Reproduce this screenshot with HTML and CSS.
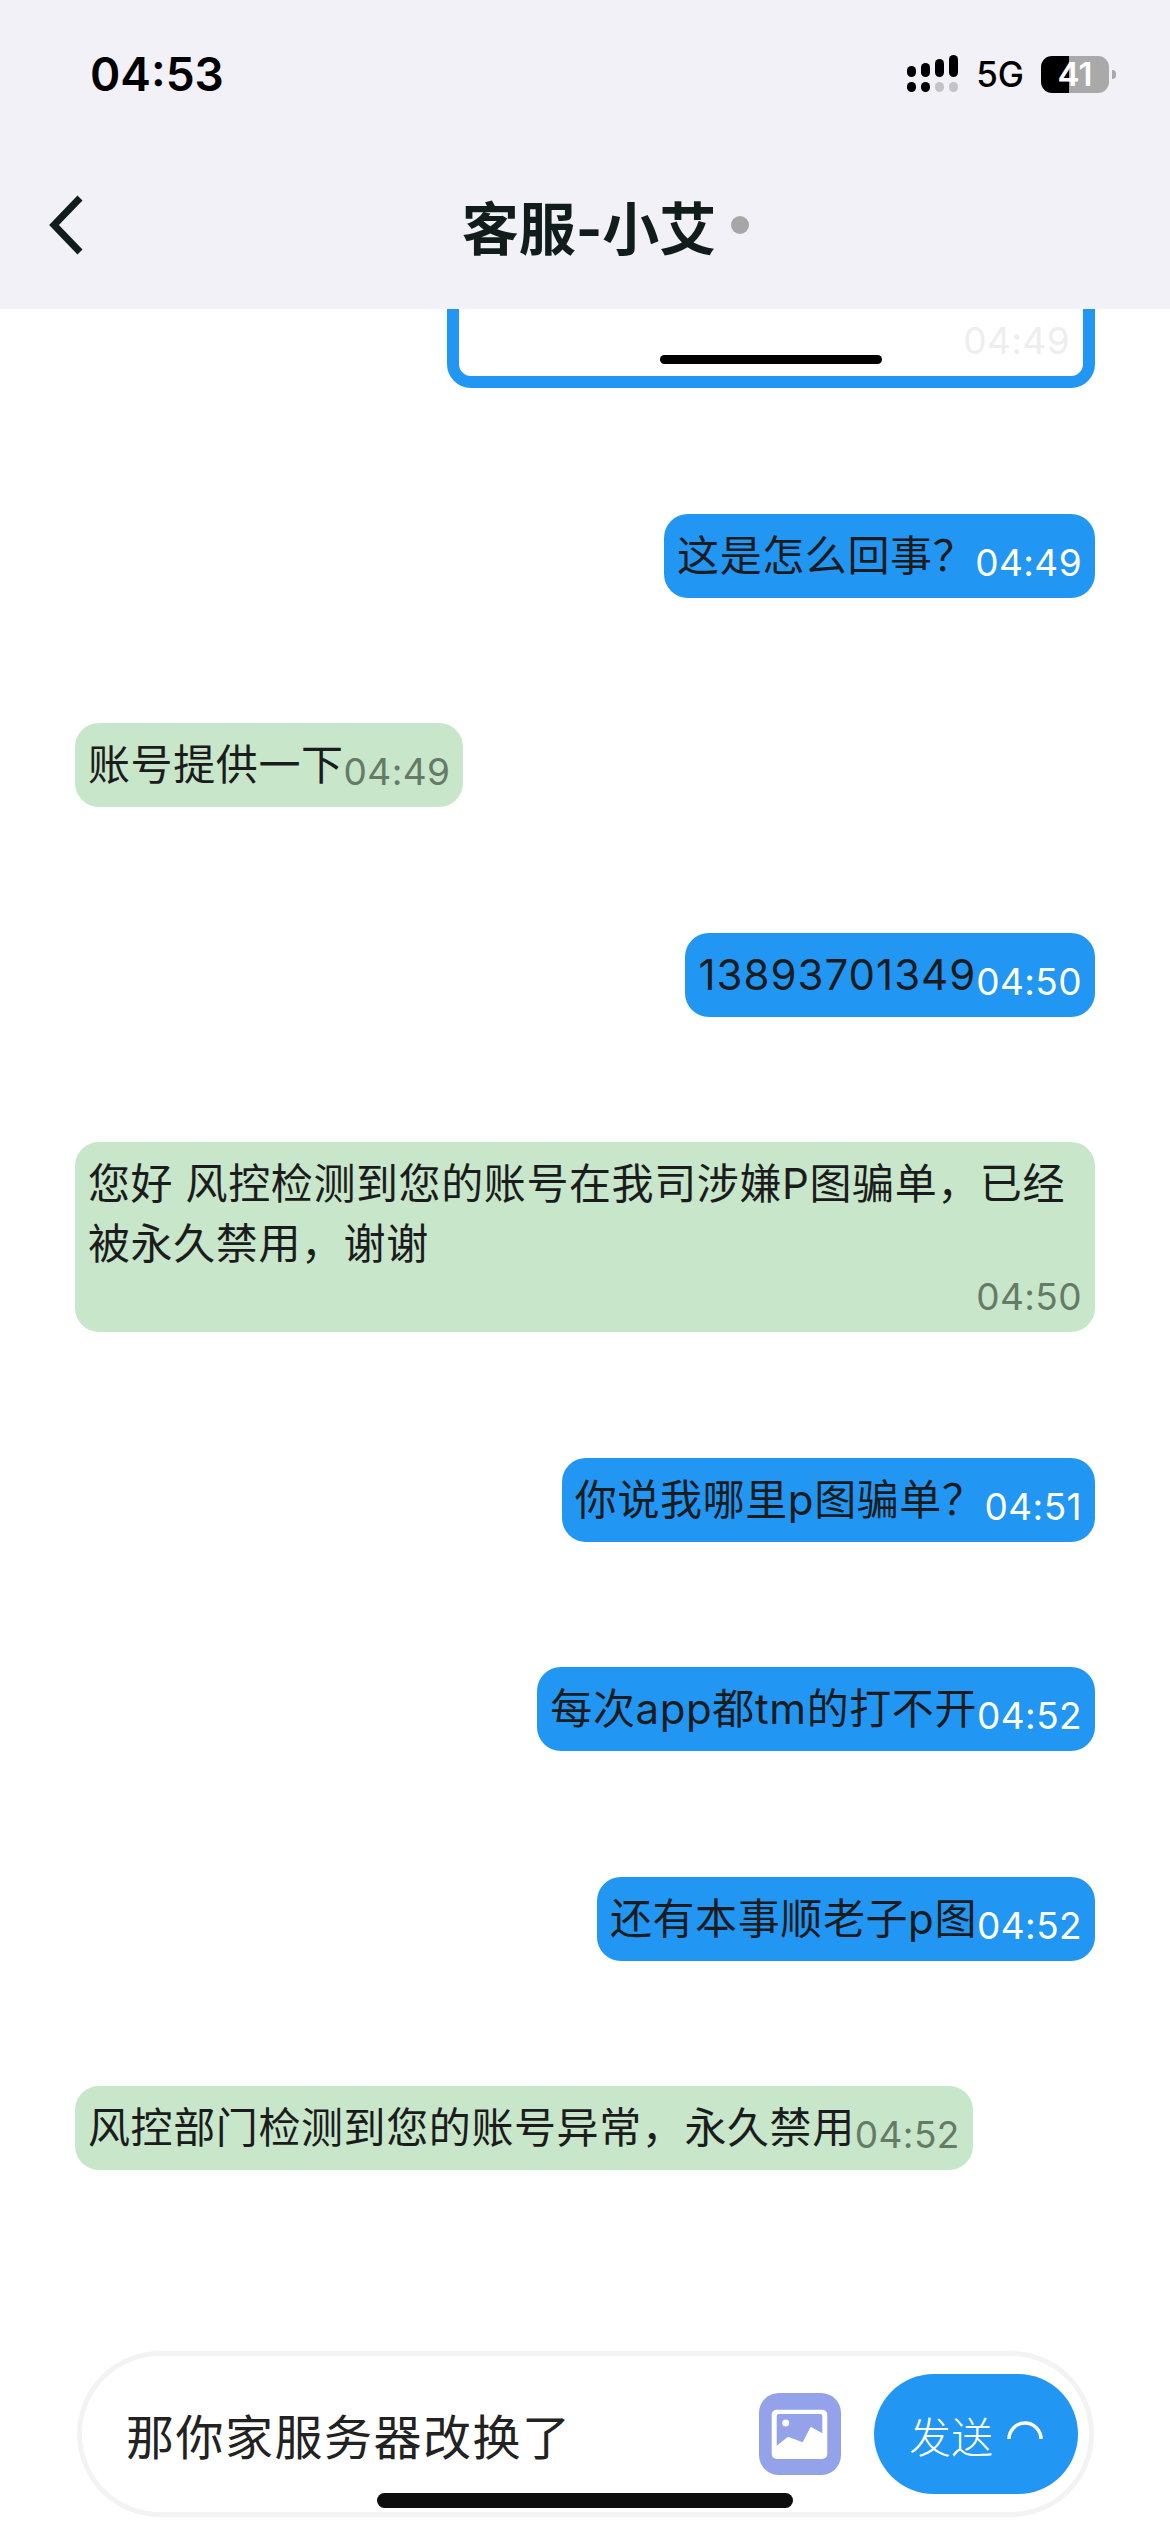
FILE: index.html
```html
<!DOCTYPE html>
<html lang="zh-CN">
<head>
  <meta charset="UTF-8" />
  <meta name="viewport" content="width=device-width, initial-scale=1.0"/>
  <title>客服-小艾</title>
  <link rel="stylesheet" href="styles.css">
</head>
<body>

  <div class="app">
    <header class="header">
      <div class="status-bar">
        <span class="clock">04:53</span>
        <div class="status-icons">
          <svg class="signal" width="52" height="38" viewBox="0 0 52 38">
            <rect x="0" y="11" width="9" height="11" rx="4.5" fill="#000"/>
            <rect x="14" y="8" width="9" height="14" rx="4.5" fill="#000"/>
            <rect x="28" y="4" width="9" height="18" rx="4.5" fill="#000"/>
            <rect x="42" y="0" width="9" height="22" rx="4.5" fill="#000"/>
            <rect x="0" y="27" width="9" height="10" rx="4.5" fill="#000"/>
            <rect x="14" y="27" width="9" height="10" rx="4.5" fill="#000"/>
            <rect x="28" y="27" width="9" height="10" rx="4.5" fill="#c4c4c6"/>
            <rect x="42" y="27" width="9" height="10" rx="4.5" fill="#c4c4c6"/>
          </svg>
          <span class="network">5G</span>
          <div class="battery"><span class="battery-level">41</span></div>
          <div class="battery-nub"></div>
        </div>
      </div>
      <nav class="nav">
        <svg class="back" width="36" height="60" viewBox="0 0 36 60">
          <path d="M32 3 L6 30 L32 57" fill="none" stroke="#111d1b" stroke-width="7"/>
        </svg>
        <h1 class="nav-title">客服-小艾</h1>
        <span class="online-dot"></span>
      </nav>
    </header>

    <main class="chat">
      <div class="bubble-shot">
        <span class="time shot-time">04:49</span>
        <div class="shot-bar"></div>
      </div>
      <div class="bubble mine"><span class="text">这是怎么回事？</span><span class="time">04:49</span></div>
      <div class="bubble theirs"><span class="text">账号提供一下</span><span class="time">04:49</span></div>
      <div class="bubble mine"><span class="text digits">13893701349</span><span class="time">04:50</span></div>
      <div class="bubble theirs"><span class="text">您好 风控检测到您的账号在我司涉嫌P图骗单，已经被永久禁用，谢谢</span><span class="time">04:50</span></div>
      <div class="bubble mine"><span class="text">你说我哪里p图骗单？</span><span class="time">04:51</span></div>
      <div class="bubble mine"><span class="text">每次app都tm的打不开</span><span class="time">04:52</span></div>
      <div class="bubble mine"><span class="text">还有本事顺老子p图</span><span class="time">04:52</span></div>
      <div class="bubble theirs"><span class="text">风控部门检测到您的账号异常，永久禁用</span><span class="time">04:52</span></div>
    </main>

    <footer class="composer">
      <div class="composer-input">那你家服务器改换了</div>
      <svg class="image-btn" width="82" height="82" viewBox="0 0 82 82">
        <rect x="0" y="0" width="82" height="82" rx="20" fill="#93a2e9"/>
        <rect x="12.7" y="16.7" width="55.6" height="49.3" rx="5" fill="#fff"/>
        <path d="M17.7 52.7 V23 a2 2 0 0 1 2 -2 H61.3 a2 2 0 0 1 2 2 V40.3 L51.7 33.7 L43.7 49.3 L29 43.7 Z" fill="#93a2e9"/>
        <circle cx="26.7" cy="30" r="3.5" fill="#fff"/>
      </svg>
      <button class="send-btn">
        发送
        <svg class="send-arc" width="36" height="20" viewBox="0 0 36 20">
          <path d="M2 19 A16 16 0 0 1 34 19" fill="none" stroke="#fff" stroke-width="3.5"/>
        </svg>
      </button>
    </footer>

    <div class="home-bar"></div>
  </div>

</body>
</html>
```

FILE: styles.css
```css
body {
  margin: 0;
  background: #fff;
  font-family: Inter, 'Noto Sans CJK SC', sans-serif;
  color: #1c1c1e;
}

.app {
  position: relative;
  display: flex;
  flex-direction: column;
  height: 2532px;
  overflow: hidden;
}

/* header */
.header {
  position: relative;
  z-index: 1;
  flex-shrink: 0;
  height: 309px;
  background: #f2f1f7;
}

.status-bar {
  display: flex;
  align-items: center;
  justify-content: space-between;
  height: 148px;
  padding: 0 54px 0 90px;
}

.clock {
  font-size: 46px;
  font-weight: 600;
  color: #000;
}

.status-icons {
  display: flex;
  align-items: center;
}

.network {
  margin: 0 17px 0 17px;
  font-size: 35px;
  font-weight: 500;
  color: #000;
}

.battery {
  display: flex;
  align-items: center;
  justify-content: center;
  width: 68px;
  height: 37px;
  border-radius: 11px;
  background: linear-gradient(to right, #000 41%, #a9a9a9 41%);
}

.battery-level {
  font-size: 33px;
  font-weight: 600;
  color: #fff;
}

.battery-nub {
  width: 4px;
  height: 9px;
  margin-left: 3px;
  border-radius: 0 5px 5px 0;
  background: #a9a9a9;
}

.nav {
  display: grid;
  grid-template-columns: 1fr auto 1fr;
  align-items: center;
  height: 154px;
  padding-left: 8px;
}

.back {
  margin-left: 40px;
}

.nav-title {
  margin: 0;
  font-size: 57px;
  font-weight: 700;
  color: #111d1b;
}

.online-dot {
  width: 18px;
  height: 18px;
  margin-left: 15px;
  border-radius: 50%;
  background: #a6a6a6;
}

/* messages */
.chat {
  flex: 1;
  min-height: 0;
  display: flex;
  flex-direction: column;
  align-items: flex-end;
  gap: 125.5px;
  padding: 0 75px;
}

.bubble {
  box-sizing: border-box;
  display: flex;
  flex-wrap: wrap;
  align-items: flex-end;
  justify-content: flex-end;
  max-width: 1020px;
  padding: 12px 13px;
  border-radius: 24px;
}

.mine {
  background: #2196f3;
}

.theirs {
  align-self: flex-start;
  background: #c8e6c9;
}

.text {
  font-size: 42px;
  line-height: 60px;
  letter-spacing: 0.6px;
}

.digits {
  letter-spacing: 1px;
}

.time {
  font-size: 37px;
  line-height: 46px;
  letter-spacing: 0.4px;
  white-space: nowrap;
}

.mine .time {
  color: #fff;
}

.theirs .time {
  color: #667a68;
}

/* cut off by the header, the list is scrolled */
.bubble-shot {
  box-sizing: border-box;
  display: flex;
  flex-direction: column;
  align-items: center;
  width: 648px;
  height: 280px;
  margin-top: -201px;
  padding: 0 13px 12px;
  border: 12px solid #2196f3;
  border-radius: 24px;
  justify-content: flex-end;
}

.shot-time {
  align-self: flex-end;
  color: #eeeeee;
}

.shot-bar {
  width: 222px;
  height: 9px;
  margin-top: -9px;
  border-radius: 5px;
  background: #000;
}

/* composer */
.composer {
  box-sizing: border-box;
  flex-shrink: 0;
  display: flex;
  align-items: center;
  width: 1017px;
  height: 166px;
  margin: 0 0 15px 77px;
  padding: 0 11px 0 44px;
  border: 5px solid #f3f3f3;
  border-radius: 83px;
}

.composer-input {
  flex: 1;
  font-size: 48px;
  letter-spacing: 1.5px;
  color: #222;
}

.image-btn {
  flex-shrink: 0;
  margin-right: 33px;
}

.send-btn {
  display: flex;
  align-items: center;
  justify-content: center;
  gap: 14px;
  width: 204px;
  height: 120px;
  padding: 0;
  border: none;
  border-radius: 60px;
  background: #2196f3;
  font-family: inherit;
  font-size: 42px;
  font-weight: 300;
  color: #fff;
}

.send-arc {
  margin-bottom: 8px;
}

.home-bar {
  position: absolute;
  left: 377px;
  bottom: 24px;
  width: 416px;
  height: 15px;
  border-radius: 8px;
  background: #0d0d0d;
}
```
